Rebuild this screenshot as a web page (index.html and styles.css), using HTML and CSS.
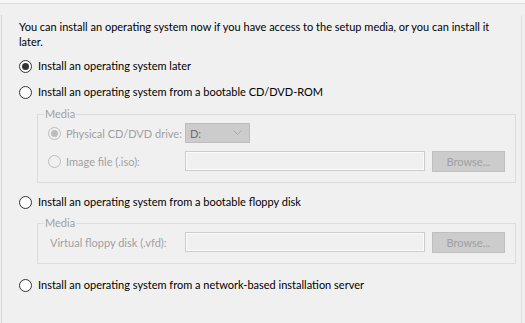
FILE: index.html
```html
<!DOCTYPE html>
<html>
<head>
<meta charset="utf-8">
<link rel="stylesheet" href="styles.css">
</head>
<body>
<div class="topbar"></div>
<div class="panel">
  <p class="intro">You can install an operating system now if you have access to the setup media, or you can install it later.</p>

  <div class="option opt-later"><span class="radio checked"></span><span>Install an operating system later</span></div>

  <div class="option opt-cd"><span class="radio"></span><span>Install an operating system from a bootable CD/DVD-ROM</span></div>

  <fieldset class="group group-cd">
    <legend>Media</legend>
    <div class="row">
      <div class="field-label"><span class="radio disabled checked"></span><span>Physical CD/DVD drive:</span></div>
      <div class="combo"><span>D:</span><svg class="chev" width="9" height="6" viewBox="0 0 9 6"><path d="M0.5 0.5 L4.5 4.5 L8.5 0.5" fill="none" stroke="#a8a8a8" stroke-width="1"/></svg></div>
    </div>
    <div class="row row2">
      <div class="field-label"><span class="radio disabled"></span><span>Image file (.iso):</span></div>
      <div class="textbox"></div>
      <div class="button">Browse...</div>
    </div>
  </fieldset>

  <div class="option opt-floppy"><span class="radio"></span><span>Install an operating system from a bootable floppy disk</span></div>

  <fieldset class="group group-floppy">
    <legend>Media</legend>
    <div class="row">
      <div class="field-label plain"><span>Virtual floppy disk (.vfd):</span></div>
      <div class="textbox"></div>
      <div class="button">Browse...</div>
    </div>
  </fieldset>

  <div class="option opt-net"><span class="radio"></span><span>Install an operating system from a network-based installation server</span></div>
</div>
</body>
</html>
```

FILE: styles.css
```css
html, body {
  margin: 0;
  padding: 0;
  background: #f0f0f0;
  height: 100%;
  overflow: hidden;
}
body {
  font-family: "Lato", "Liberation Sans", sans-serif;
  font-size: 11px;
  color: #000;
}
.topbar {
  height: 3px;
  background: #f7f7f7;
  border-bottom: 1px solid #dcdcdc;
}
.panel {
  margin-top: 11px;
  margin-left: 1px;
  border-left: 1px solid #d5d5d5;
  border-right: 1px solid #e0e0e0;
  width: 521px;
  height: 309px;
  padding: 4px 0 0 17px;
  box-sizing: border-box;
  overflow: hidden;
}
.intro {
  margin: 0;
  line-height: 15px;
  width: 480px;
}
.option {
  display: flex;
  align-items: center;
  gap: 6px;
  height: 16px;
  line-height: 16px;
  white-space: nowrap;
}
.opt-later { margin-top: 9px; }
.opt-cd { margin-top: 10px; }
.opt-floppy { margin-top: 11px; }
.opt-net { margin-top: 13px; }
.radio {
  width: 13px;
  height: 13px;
  box-sizing: border-box;
  border: 1px solid #333;
  border-radius: 50%;
  background: #fff;
  flex: none;
  position: relative;
}
.radio.checked::after {
  content: "";
  position: absolute;
  left: 2px;
  top: 2px;
  width: 7px;
  height: 7px;
  border-radius: 50%;
  background: #333;
}
.radio.disabled {
  border-color: #bcbcbc;
  background: #f0f0f0;
}
.radio.disabled.checked::after {
  background: #bcbcbc;
}
.group {
  margin: 0 0 0 18px;
  width: 479px;
  box-sizing: border-box;
  border: 1px solid #dcdcdc;
  padding: 3px 10px 11px 10px;
  min-width: 0;
}
.group-cd { margin-top: 8px; }
.group-floppy { margin-top: 7px; }
.group legend {
  color: #a0a0a0;
  padding: 0 1px;
  margin-left: -4px;
  line-height: 12px;
  height: 12px;
}
.row {
  display: flex;
  align-items: center;
  height: 20px;
}
.row2 { margin-top: 8px; }
.field-label {
  width: 137px;
  flex: none;
  display: flex;
  align-items: center;
  gap: 5px;
  color: #a0a0a0;
  white-space: nowrap;
}
.field-label.plain { padding-left: 2px; box-sizing: border-box; }
.combo {
  width: 65px;
  height: 20px;
  box-sizing: border-box;
  background: #cccccc;
  border: 1px solid #bdbdbd;
  display: flex;
  align-items: center;
  justify-content: space-between;
  padding: 0 7px 0 4px;
  color: #6d6d6d;
}
.textbox {
  width: 240px;
  height: 20px;
  box-sizing: border-box;
  border: 1px solid #cccccc;
  box-shadow: inset 0 0 0 1px #fbfbfb;
  background: #f0f0f0;
  flex: none;
}
.button {
  margin-left: 7px;
  width: 73px;
  height: 21px;
  box-sizing: border-box;
  background: #cccccc;
  border: 1px solid #bfbfbf;
  color: #a0a0a0;
  display: flex;
  align-items: center;
  justify-content: center;
  flex: none;
}
```
